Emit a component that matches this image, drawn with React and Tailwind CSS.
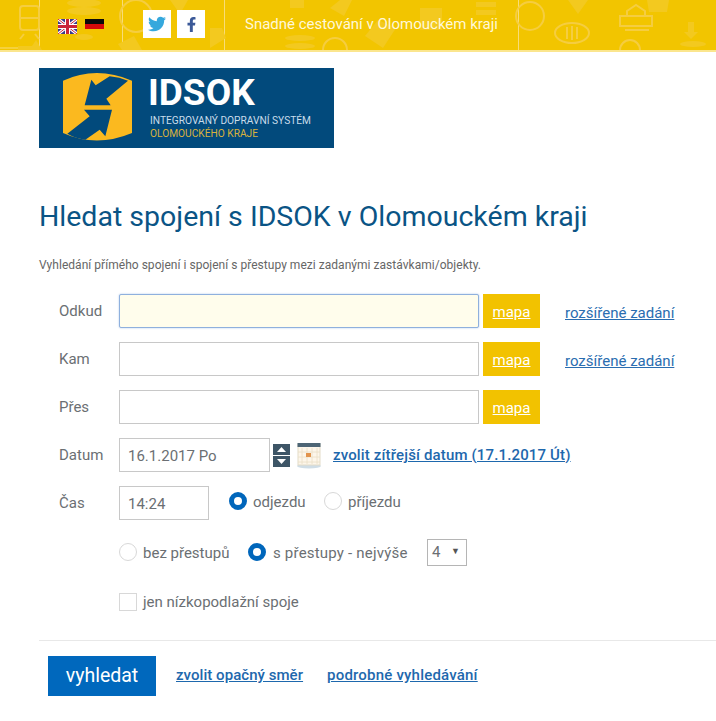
import React from "react";
import { FaTwitter, FaFacebookF } from "react-icons/fa";

function HeaderDecor() {
  const s = { stroke: "#f5cd40", strokeWidth: 2, fill: "none" };
  const f = { fill: "#f3c91f" };
  return (
    <svg className="absolute inset-0 pointer-events-none" width="716" height="50" viewBox="0 0 716 50">
      <g {...s}>
        <path d="M39.5 0V48H0" strokeWidth="1" stroke="#f8dc78" />
        <path d="M122.5 0V48" strokeWidth="1" stroke="#f8dc78" />
        <path d="M224.5 0V50" strokeWidth="1" stroke="#f8dc78" />
        <path d="M518.5 0V50" strokeWidth="1" stroke="#f8dc78" />
        <rect x="20" y="6" width="19" height="24" rx="3" />
        <path d="M20 18H39M24 34l-4 5M35 34l4 5" />
        <circle cx="136" cy="16" r="16" />
        <circle cx="530" cy="16" r="14" />
        <path d="M620 16h32v10h-32zM627 16v-5l9-6 9 6v5M625 30h24" />
        <ellipse cx="572" cy="33" rx="17" ry="10" />
        <path d="M567 27v12M572 26v14M577 27v12" />
        <circle cx="630" cy="50" r="10" />
        <circle cx="335" cy="50" r="12" />
      </g>
      <g {...f}>
        <ellipse cx="84" cy="3" rx="17" ry="4" />
        <ellipse cx="84" cy="11" rx="17" ry="4" />
        <ellipse cx="84" cy="37" rx="9" ry="3" />
        <ellipse cx="300" cy="38" rx="15" ry="3" />
        <ellipse cx="300" cy="46" rx="15" ry="3" />
        <path d="M170 0h18l-8 14zM210 28h12l4 10-16 10z" />
        <path d="M290 0h14v8h-14zM420 8h22v22h-22zM476 2h20v5h-20zM476 10h20v5h-20z" />
        <path d="M378 20l18 8-13 20-18-12zM330 8l10-8h12l-8 16z" />
        <path d="M568 0h20l-10 14zM647 0h22l-2 12h-18zM688 22h6v10l4 0-7 7-7-7h4z" />
        <ellipse cx="693" cy="44" rx="13" ry="3" />
        <path d="M18 46h14l4-6 6 10H18zM118 44l16-8 8 14h-20z" />
      </g>
    </svg>
  );
}

function Flags() {
  return (
    <div className="flex items-start gap-2">
      <svg width="19" height="15" viewBox="0 0 19 15">
        <rect width="19" height="15" fill="#3a3a8c" />
        <path d="M0 0L19 15M19 0L0 15" stroke="#fff" strokeWidth="3" />
        <path d="M0 0L19 15M19 0L0 15" stroke="#c8243c" strokeWidth="1" />
        <path d="M9.5 0V15M0 7.5H19" stroke="#fff" strokeWidth="5" />
        <path d="M9.5 0V15M0 7.5H19" stroke="#c8243c" strokeWidth="3" />
      </svg>
      <svg width="19" height="15" viewBox="0 0 19 15">
        <rect width="19" height="5" fill="#0a0a0a" />
        <rect y="5" width="19" height="5" fill="#d60a0a" />
        <rect y="10" width="19" height="5" fill="#f4c400" />
      </svg>
    </div>
  );
}

function Logo() {
  return (
    <div className="relative w-[295px] h-[80px] bg-[#024a7c] ml-[39px] overflow-hidden">
      <svg className="absolute left-[19px] top-0" width="80" height="80" viewBox="0 0 240 240">
        <path d="M15 38Q115 -8 222 38V195Q115 240 15 195Z" fill="#fbb91f" />
        <path d="M80 112L100 35L113 52L155 25Q185 28 210 38L145 92L158 112Z" fill="#024a7c" />
        <path d="M162 125L142 205L125 185L82 215Q50 210 28 197L95 145L78 125Z" fill="#024a7c" />
      </svg>
      <div className="absolute left-[109px] top-[2px] text-white font-bold text-[37px] leading-[46px] whitespace-nowrap">IDSOK</div>
      <div className="absolute left-[111px] top-[46px] text-[#c9dcea] text-[10.2px] leading-[14px] whitespace-nowrap">INTEGROVANÝ DOPRAVNÍ SYSTÉM</div>
      <div className="absolute left-[111px] top-[59px] text-[#d9b23c] text-[10.2px] leading-[14px] whitespace-nowrap">OLOMOUCKÉHO KRAJE</div>
    </div>
  );
}

function Radio({ on, className = "" }) {
  return on ? (
    <span className={"inline-block shrink-0 w-[18px] h-[18px] rounded-full border-[5px] border-[#0066bb] bg-white " + className} />
  ) : (
    <span className={"inline-block shrink-0 w-[18px] h-[18px] rounded-full border border-[#d8d8d8] bg-white " + className} />
  );
}

function Mapa() {
  return (
    <a className="flex items-center justify-center w-[57px] h-[34px] pt-[2px] ml-1 bg-[#f2c200] text-white underline text-[15px]">mapa</a>
  );
}

function Row({ label, children, className = "" }) {
  return (
    <div className={"flex items-center h-[34px] ml-[39px] " + className}>
      <div className="w-[80px] pl-[20px] shrink-0 text-[15px] text-[#6b6f73]">{label}</div>
      {children}
    </div>
  );
}

function More() {
  return <a className="ml-[25px] mt-[4px] text-[15px] text-[#2a6db0] underline whitespace-nowrap">rozšířené zadání</a>;
}

export default function App() {
  return (
    <div className="w-[716px] h-[721px] overflow-hidden bg-white text-[#6b6f73]" style={{ fontFamily: 'Roboto, sans-serif' }}>
      <header className="relative h-[52px] bg-[#f2c500] border-b-2 border-[#fbe68e] flex items-center">
        <HeaderDecor />
        <div className="relative flex items-start pl-[58px] -mt-[2px] h-[28px]">
          <div className="pt-[9px]"><Flags /></div>
          <div className="flex gap-[6px] ml-[39px]">
            <span className="flex items-center justify-center w-[28px] h-[28px] bg-white text-[#35a8dd] text-[18px]"><FaTwitter /></span>
            <span className="flex items-center justify-center w-[28px] h-[28px] bg-white text-[#3b5998] text-[15px]"><FaFacebookF /></span>
          </div>
          <div className="ml-[40px] text-[15px] leading-[28px] text-[#fff8d8] whitespace-nowrap">Snadné cestování v Olomouckém kraji</div>
        </div>
      </header>

      <div className="pt-[16px]"><Logo /></div>

      <h1 className="ml-[39px] mt-[50px] text-[28.5px] leading-[38px] text-[#0a5485] whitespace-nowrap">Hledat spojení s IDSOK v Olomouckém kraji</h1>
      <p className="ml-[39px] mt-[21px] text-[12px] leading-[16px] text-[#666] tracking-[0.03px]">Vyhledání přímého spojení i spojení s přestupy mezi zadanými zastávkami/objekty.</p>

      <form className="mt-[21px] flex flex-col">
        <Row label="Odkud">
          <input className="w-[360px] h-[34px] rounded-[2px] border border-[#8fb0dd] bg-[#fffdec] shadow-[0_0_2px_#a8c4ea] outline-none" />
          <Mapa />
          <More />
        </Row>
        <Row label="Kam" className="mt-[14px]">
          <input className="w-[360px] h-[34px] border border-[#c8c8c8] bg-white outline-none" />
          <Mapa />
          <More />
        </Row>
        <Row label="Přes" className="mt-[14px]">
          <input className="w-[360px] h-[34px] border border-[#c8c8c8] bg-white outline-none" />
          <Mapa />
        </Row>
        <Row label="Datum" className="mt-[14px]">
          <div className="w-[151px] h-[34px] border border-[#c8c8c8] flex items-center pl-2 pt-[2px] text-[15px] text-[#6b6f73]">16.1.2017 Po</div>
          <div className="ml-[3px] flex flex-col gap-[1px]">
            <div className="w-[17px] h-[11px] bg-[#3d5566] flex items-center justify-center">
              <svg width="9" height="5" viewBox="0 0 9 5"><path d="M4.5 0L9 5H0Z" fill="#fff" /></svg>
            </div>
            <div className="w-[17px] h-[11px] bg-[#3d5566] flex items-center justify-center">
              <svg width="9" height="5" viewBox="0 0 9 5"><path d="M0 0H9L4.5 5Z" fill="#fff" /></svg>
            </div>
          </div>
          <svg className="ml-[7px] mt-[2px]" width="24" height="26" viewBox="0 0 24 26">
            <ellipse cx="12" cy="23" rx="12" ry="2.5" fill="#cfdde6" />
            <rect x="1" y="1" width="22" height="21" fill="#fdf6ea" stroke="#e3dcc8" />
            <rect x="0.5" y="0" width="23" height="4" fill="#4d6575" />
            <path d="M5 5v16M10 5v16M15 5v16M20 5v16M1 9h22M1 14h22M1 19h22" stroke="#eadfc6" strokeWidth="0.8" />
            <rect x="9" y="10" width="5" height="4" fill="#e2944d" />
          </svg>
          <a className="ml-[12px] text-[15px] font-medium tracking-[0.15px] text-[#1e68ad] underline whitespace-nowrap">zvolit zítřejší datum (17.1.2017 Út)</a>
        </Row>
        <Row label="Čas" className="mt-[14px]">
          <div className="w-[90px] h-[34px] border border-[#c8c8c8] flex items-center pl-2 pt-[3px] text-[15px] text-[#6b6f73]">14:24</div>
          <div className="flex items-center -mt-[4px] ml-[20px] text-[15px] text-[#6b6f73]">
            <Radio on />
            <span className="ml-[6px] mt-[2px] w-[52px]">odjezdu</span>
            <Radio className="ml-[19px]" />
            <span className="ml-[6px] mt-[2px]">příjezdu</span>
          </div>
        </Row>
        <div className="flex items-center ml-[119px] mt-[15px] h-[34px] text-[15px] text-[#6b6f73]">
          <Radio />
          <span className="ml-[6px] mt-[2px] w-[87px] whitespace-nowrap">bez přestupů</span>
          <Radio on className="ml-[18px]" />
          <span className="ml-[7px] mt-[2px] w-[135px] tracking-[0.2px] whitespace-nowrap">s přestupy - nejvýše</span>
          <div className="ml-[19px] w-[40px] h-[27px] border border-[#b5b5b5] flex items-center justify-between pl-[4px] pr-[6px]">
            <span>4</span>
            <span className="text-[9px] text-[#555]">▼</span>
          </div>
        </div>
        <div className="flex items-center ml-[119px] mt-[24px] h-[18px] text-[15px] text-[#6b6f73]">
          <span className="inline-block w-[18px] h-[18px] border border-[#d8d8d8]" />
          <span className="ml-[6px]">jen nízkopodlažní spoje</span>
        </div>
      </form>

      <div className="ml-[39px] mt-[29px] border-t border-[#e8e8e8] pt-[15px] pl-[9px] flex items-center">
        <button className="w-[108px] h-[40px] bg-[#0068bd] text-white text-[19.5px]">vyhledat</button>
        <a className="ml-[20px] -mt-[2px] text-[15px] text-[#1e68ad] underline font-medium tracking-[0.05px] whitespace-nowrap">zvolit opačný směr</a>
        <a className="ml-[24px] -mt-[2px] text-[15px] text-[#1e68ad] underline font-medium tracking-[0.2px] whitespace-nowrap">podrobné vyhledávání</a>
      </div>
    </div>
  );
}
